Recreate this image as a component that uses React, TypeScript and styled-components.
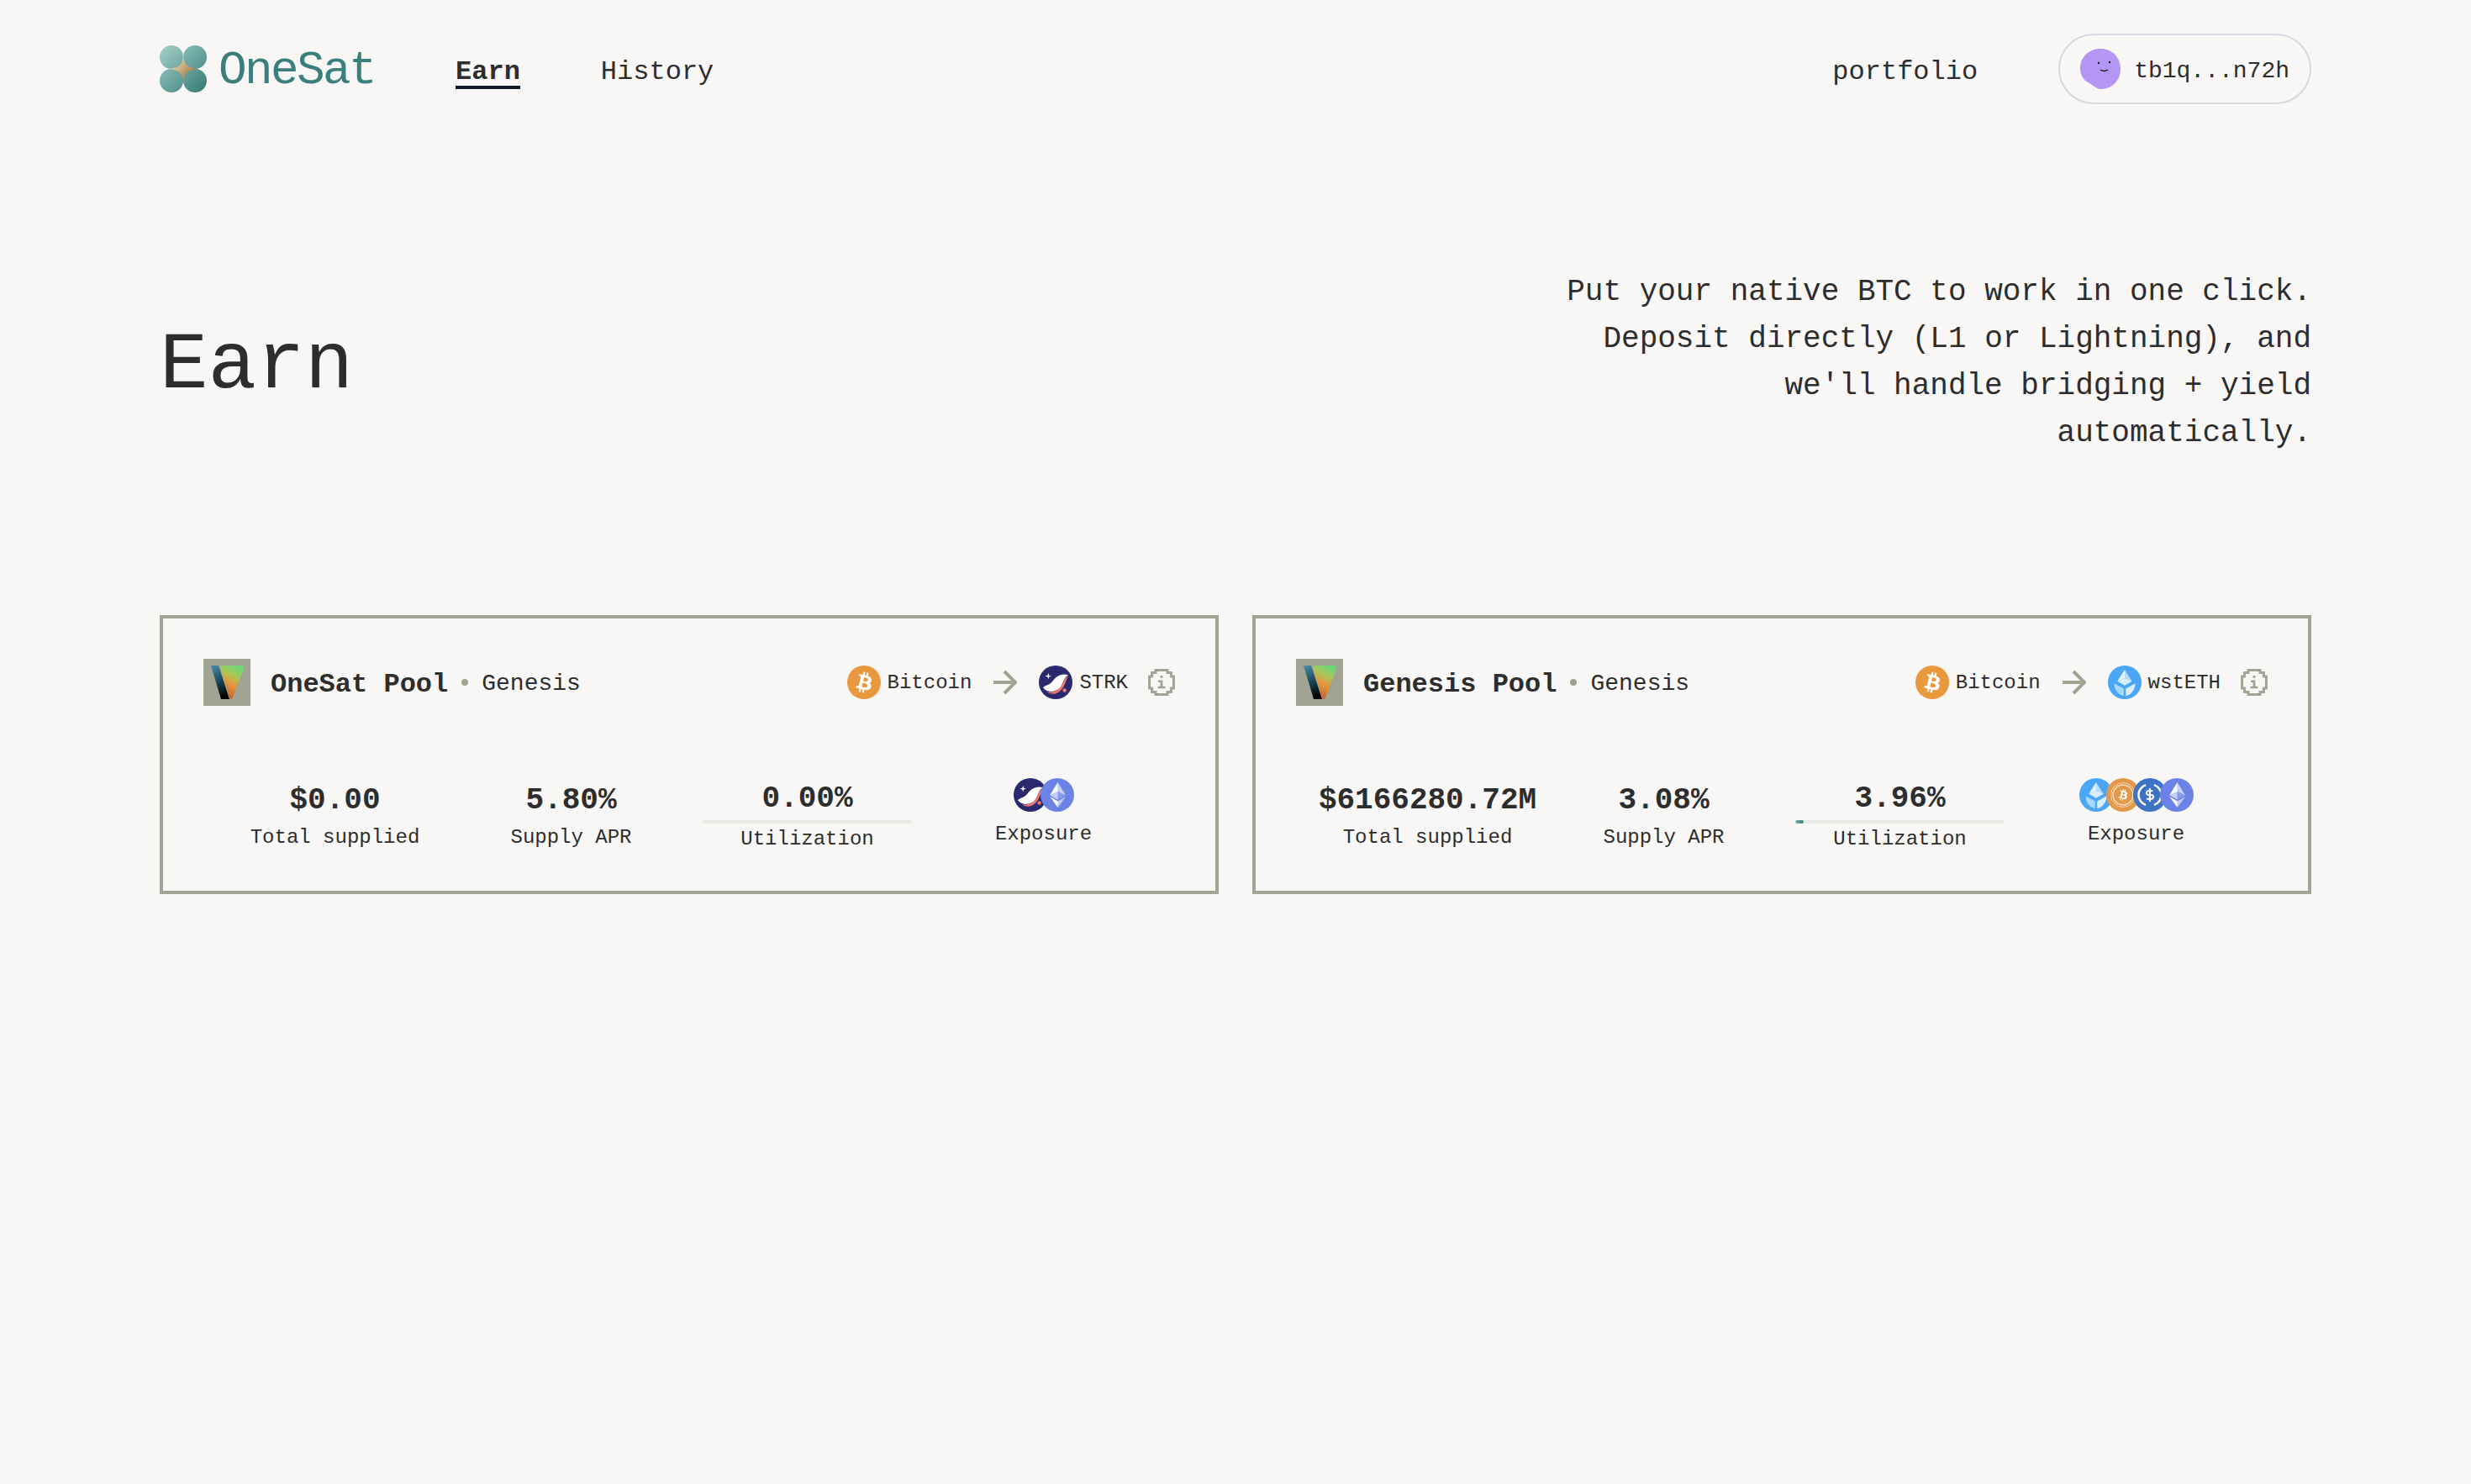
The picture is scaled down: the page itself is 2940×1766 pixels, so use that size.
import React from "react";
import styled, { createGlobalStyle } from "styled-components";

const GlobalStyle = createGlobalStyle`
    * {
        box-sizing: border-box;
    }

    body {
        margin: 0;
        background: #f8f7f5;
        color: #2d2d2d;
        font-family: "Liberation Mono", "DejaVu Sans Mono", monospace;
    }
`;

const Page = styled.div`
    min-height: 100vh;
    padding: 40px 190px 0;
`;

const Header = styled.header`
    display: flex;
    align-items: center;
    justify-content: space-between;
    height: 84px;
`;

const HeaderSide = styled.div`
    display: flex;
    align-items: center;
    gap: 96px;
`;

const Brand = styled.div`
    display: flex;
    align-items: center;
    gap: 14px;
`;

const BrandName = styled.span`
    padding-top: 4px;
    font-size: 56px;
    line-height: 56px;
    letter-spacing: -2.6px;
    color: #3a7f7d;
`;

const Nav = styled.nav`
    display: flex;
    gap: 96px;
`;

const NavLink = styled.a<{ $active?: boolean }>`
    font-size: 32px;
    line-height: 32px;
    font-weight: ${props => (props.$active ? 700 : 400)};
    border-top: 12px solid transparent;
    border-bottom: 4px solid ${props => (props.$active ? "#111827" : "transparent")};
`;

const PortfolioLink = styled.a`
    padding-top: 8px;
    font-size: 32px;
    line-height: 40px;
`;

const WalletPill = styled.button`
    display: flex;
    align-items: center;
    gap: 16px;
    height: 84px;
    padding: 0 24px;
    border: 2px solid #d6d8e0;
    border-radius: 42px;
    background: transparent;
    color: inherit;
    font-family: inherit;
    font-size: 28px;
`;

const WalletAddress = styled.span`
    padding-top: 4px;
`;

const Hero = styled.section`
    display: flex;
    align-items: center;
    justify-content: space-between;
    padding: 188px 0;
`;

const Title = styled.h1`
    margin: 0;
    padding-top: 16px;
    font-size: 96px;
    line-height: 120px;
    font-weight: 400;
`;

const Intro = styled.p`
    margin: 0;
    max-width: 900px;
    padding-top: 8px;
    font-size: 36px;
    line-height: 56px;
    text-align: right;
`;

const PoolGrid = styled.div`
    display: grid;
    grid-template-columns: repeat(2, minmax(0, 1fr));
    gap: 40px;
`;

const PoolCard = styled.article`
    padding: 48px;
    border: 4px solid #a1a492;
`;

const CardTop = styled.div`
    display: flex;
    align-items: center;
    justify-content: space-between;
    height: 56px;
`;

const PoolName = styled.div`
    display: flex;
    align-items: center;
    gap: 24px;
`;

const PoolTitle = styled.div`
    display: flex;
    align-items: center;
    gap: 16px;
`;

const PoolHeading = styled.strong`
    padding-top: 4px;
    font-size: 32px;
    font-weight: 700;
`;

const PoolTag = styled.span`
    padding-top: 2px;
    font-size: 28px;
`;

const Dot = styled.span`
    width: 8px;
    height: 8px;
    border-radius: 50%;
    background: #a1a492;
`;

const Route = styled.div`
    display: flex;
    align-items: center;
    font-size: 24px;
`;

const RouteToken = styled.span`
    display: flex;
    align-items: center;
    gap: 8px;
`;

const RouteArrow = styled.svg`
    width: 28px;
    height: 30px;
    margin: 0 26px;
`;

const InfoIcon = styled.svg`
    width: 32px;
    height: 32px;
    margin-left: 24px;
`;

const StatRow = styled.div`
    display: grid;
    grid-template-columns: repeat(4, minmax(0, 1fr));
    align-items: center;
    height: 92px;
    margin-top: 80px;
    padding: 0 16px;
`;

const Stat = styled.div`
    display: flex;
    flex-direction: column;
    align-items: center;
    min-width: 0;
    padding: 0 16px;
    white-space: nowrap;
`;

const StatValue = styled.div`
    padding-top: 6px;
    font-size: 36px;
    line-height: 50px;
    font-weight: 700;
`;

const StatLabel = styled.div`
    padding-top: 6px;
    font-size: 24px;
    line-height: 26px;
`;

const Track = styled.div`
    width: 100%;
    height: 4px;
    border-radius: 2px;
    background: #e8e9e4;
    overflow: hidden;
`;

const TrackFill = styled.div`
    height: 100%;
    border-radius: 2px;
    background: linear-gradient(90deg, #6fb0aa, #3c807d);
`;

const CoinStack = styled.div`
    display: flex;
    margin-bottom: 8px;

    svg + svg {
        margin-left: -8px;
    }
`;

const BrandMark = () => (
    <svg width="56" height="56" viewBox="0 0 56 56">
        <defs>
            <linearGradient id="petal" gradientUnits="userSpaceOnUse" x1="2" y1="2" x2="54" y2="54">
                <stop offset="0" stopColor="#a0cfc6" />
                <stop offset="1" stopColor="#377c79" />
            </linearGradient>
            <linearGradient id="spark" x1="0" y1="0" x2="1" y2="1">
                <stop offset="0" stopColor="#fffaf0" />
                <stop offset="0.45" stopColor="#c9ab7c" />
                <stop offset="1" stopColor="#6e5128" />
            </linearGradient>
        </defs>
        <circle cx="14" cy="14" r="14" fill="url(#petal)" />
        <circle cx="42" cy="14" r="14" fill="url(#petal)" />
        <circle cx="14" cy="42" r="14" fill="url(#petal)" />
        <circle cx="42" cy="42" r="14" fill="url(#petal)" />
        <path d="M28 9C28.600 22 30 26 47 28C30 30 28.600 34 28 47C27.400 34 26 30 11 28C26 26 27.400 22 28 9Z" fill="url(#spark)" />
    </svg>
);

const Avatar = () => (
    <svg width="48" height="48" viewBox="0 0 48 48">
        <path d="M24 0C38 0 48 10 48 24C48 38 38 48 24 48C20 48 18 45 6 38C2 34 0 29 0 24C0 10 10 0 24 0Z" fill="#b497f5" />
        <circle cx="22" cy="17" r="1.2" fill="#1c1c1c" />
        <circle cx="35" cy="16" r="1.2" fill="#1c1c1c" />
        <path d="M24 25C27 27 30 27 33 25" stroke="#1c1c1c" strokeWidth="1.4" fill="none" />
    </svg>
);

const VaultMark = ({ id }: { id: string }) => (
    <svg width="56" height="56" viewBox="0 0 56 56">
        <defs>
            <linearGradient id={`${id}-bar`} x1="0" y1="0" x2="0.3" y2="1">
                <stop offset="0" stopColor="#4a8fae" />
                <stop offset="0.5" stopColor="#1f4f63" />
                <stop offset="1" stopColor="#050607" />
            </linearGradient>
            <linearGradient id={`${id}-wedge`} x1="0.7" y1="0" x2="0.35" y2="1">
                <stop offset="0" stopColor="#6ad877" />
                <stop offset="0.3" stopColor="#a9c75a" />
                <stop offset="0.55" stopColor="#e59a3c" />
                <stop offset="1" stopColor="#c85d2a" />
            </linearGradient>
        </defs>
        <rect width="56" height="56" fill="#a1a492" />
        <path d="M9 8H18L31 48H21Z" fill={`url(#${id}-bar)`} />
        <path d="M21 8H46C48 8 48.500 10 48 12L35 46C34 48.500 32 48.500 31 46L20 10C20 9 20 8 21 8Z" fill={`url(#${id}-wedge)`} />
    </svg>
);

const EthShape = () => (
    <g fill="#fff">
        <path fillOpacity=".6" d="M16.498 4v8.87l7.497 3.35z" />
        <path d="M16.498 4L9 16.22l7.498-3.35z" />
        <path fillOpacity=".6" d="M16.498 21.968v6.027L24 17.616z" />
        <path d="M16.498 27.995v-6.028L9 17.616z" />
        <path fillOpacity=".2" d="M16.498 20.573l7.497-4.353-7.497-3.348z" />
        <path fillOpacity=".6" d="M9 16.22l7.498 4.353v-7.701z" />
    </g>
);

const btcPath =
    "M23.189 14.02c.314-2.096-1.283-3.223-3.465-3.975l.708-2.84-1.728-.43-.69 2.765c-.454-.114-.92-.22-1.385-.326l.695-2.783L15.596 6l-.708 2.839c-.376-.086-.746-.17-1.104-.26l.002-.009-2.384-.595-.46 1.846s1.283.294 1.256.312c.7.175.826.638.805 1.006l-.806 3.235c.048.012.11.03.18.057l-.183-.045-1.13 4.532c-.086.212-.303.531-.793.41.018.025-1.256-.313-1.256-.313l-.858 1.978 2.25.561c.418.105.828.215 1.231.318l-.715 2.872 1.727.43.708-2.84c.472.127.93.245 1.378.357l-.706 2.828 1.728.43.715-2.866c2.948.558 5.164.333 6.097-2.333.752-2.146-.037-3.385-1.588-4.192 1.13-.26 1.98-1.003 2.207-2.538zm-3.95 5.538c-.533 2.147-4.148.986-5.32.695l.95-3.805c1.172.293 4.929.872 4.37 3.11zm.535-5.569c-.487 1.953-3.495.96-4.47.717l.86-3.45c.975.243 4.118.696 3.61 2.733z";

type CoinName = "btc" | "strk" | "eth" | "wsteth" | "wbtc" | "usdc";

const coinArt: Record<CoinName, React.ReactNode> = {
    btc: (
        <>
            <circle cx="16" cy="16" r="16" fill="#e9983d" />
            <path d={btcPath} fill="#fff" />
        </>
    ),
    strk: (
        <>
            <circle cx="16" cy="16" r="16" fill="#29296e" />
            <path
                d="M4 21C7 18 10 19 13 15C16 11 21 7 28 9C24 11 24 15 21 20C18 25 8 27 4 21Z"
                fill="#fff"
            />
            <path d="M8 25C14 26 18 24 21 20C23.500 16 24 12 28 9C25 17 23 26 14 27C11 27 9 26 8 25Z" fill="#ec796b" />
            <circle cx="24.500" cy="23.500" r="1.800" fill="#ec796b" />
            <path d="M9 7L9.700 9.300L12 10L9.700 10.700L9 13L8.300 10.700L6 10L8.300 9.300Z" fill="#fff" />
        </>
    ),
    eth: (
        <>
            <circle cx="16" cy="16" r="16" fill="#6b82e6" />
            <EthShape />
        </>
    ),
    wsteth: (
        <>
            <circle cx="16" cy="16" r="16" fill="#4ba6f5" />
            <path d="M16 4L23 15L16 12Z" fill="#fff" fillOpacity=".6" />
            <path d="M16 4L9 15L16 12Z" fill="#fff" fillOpacity=".85" />
            <path d="M16 12L23 15L16 19L9 15Z" fill="#d9efff" />
            <path d="M6 17L15 22V29C10 28 6 23 6 17Z" fill="#a9d8fb" />
            <path d="M26 17L17 22V29C22 28 26 23 26 17Z" fill="#d9efff" />
        </>
    ),
    wbtc: (
        <>
            <circle cx="16" cy="16" r="16" fill="#e4984a" />
            <circle cx="16" cy="16" r="11.500" fill="none" stroke="#f3d3ab" strokeWidth=".8" />
            <circle cx="16" cy="16" r="9.500" fill="none" stroke="#fbeedd" strokeWidth=".9" />
            <g transform="translate(7.200 7.200) scale(.55)">
                <path d={btcPath} fill="#fff" />
            </g>
        </>
    ),
    usdc: (
        <>
            <circle cx="16" cy="16" r="16" fill="#3e73c4" />
            <path d="M12 6.500A10 10 0 0 0 12 25.500M20 6.500A10 10 0 0 1 20 25.500" stroke="#fff" strokeWidth="2" fill="none" />
            <g transform="translate(9.500 9.500) scale(.54)" stroke="#fff" strokeWidth="3" fill="none">
                <path d="M12 0V24M17 5H9.500A3.500 3.500 0 0 0 9.500 12H14.500A3.500 3.500 0 0 1 14.500 19H6" />
            </g>
        </>
    ),
};

const Coin = ({ name }: { name: CoinName }) => (
    <svg width="40" height="40" viewBox="0 0 32 32">
        {coinArt[name]}
    </svg>
);

type Pool = {
    id: string;
    name: string;
    target: string;
    targetCoin: CoinName;
    supplied: string;
    apr: string;
    utilization: number;
    exposure: CoinName[];
};

const pools: Pool[] = [
    {
        id: "onesat",
        name: "OneSat Pool",
        target: "STRK",
        targetCoin: "strk",
        supplied: "$0.00",
        apr: "5.80%",
        utilization: 0,
        exposure: ["strk", "eth"],
    },
    {
        id: "genesis",
        name: "Genesis Pool",
        target: "wstETH",
        targetCoin: "wsteth",
        supplied: "$6166280.72M",
        apr: "3.08%",
        utilization: 3.96,
        exposure: ["wsteth", "wbtc", "usdc", "eth"],
    },
];

const App = () => {
    return (
        <Page>
            <GlobalStyle />
            <Header>
                <HeaderSide>
                    <Brand>
                        <BrandMark />
                        <BrandName>OneSat</BrandName>
                    </Brand>
                    <Nav>
                        <NavLink $active>Earn</NavLink>
                        <NavLink>History</NavLink>
                    </Nav>
                </HeaderSide>
                <HeaderSide>
                    <PortfolioLink>portfolio</PortfolioLink>
                    <WalletPill>
                        <Avatar />
                        <WalletAddress>tb1q...n72h</WalletAddress>
                    </WalletPill>
                </HeaderSide>
            </Header>
            <Hero>
                <Title>Earn</Title>
                <Intro>
                    Put your native BTC to work in one click. Deposit directly (L1 or
                    Lightning), and we'll handle bridging + yield automatically.
                </Intro>
            </Hero>
            <PoolGrid>
                {pools.map(pool => (
                    <PoolCard key={pool.id}>
                        <CardTop>
                            <PoolName>
                                <VaultMark id={pool.id} />
                                <PoolTitle>
                                    <PoolHeading>{pool.name}</PoolHeading>
                                    <Dot />
                                    <PoolTag>Genesis</PoolTag>
                                </PoolTitle>
                            </PoolName>
                            <Route>
                                <RouteToken>
                                    <Coin name="btc" />
                                    Bitcoin
                                </RouteToken>
                                <RouteArrow viewBox="0 0 28 30" fill="none" stroke="#a1a492" strokeWidth="4">
                                    <path d="M0 15H25M13 2L26 15L13 28" />
                                </RouteArrow>
                                <RouteToken>
                                    <Coin name={pool.targetCoin} />
                                    {pool.target}
                                </RouteToken>
                                <InfoIcon viewBox="0 0 16 16">
                                    <path
                                        d="M4.500 .8H11.500V2.300H13.700V4.500H15.200V11.500H13.700V13.700H11.500V15.200H4.500V13.700H2.300V11.500H.8V4.500H2.300V2.300H4.500Z"
                                        fill="none"
                                        stroke="#a1a492"
                                        strokeWidth="1.500"
                                    />
                                    <path
                                        d="M7.300 4H8.700V5.400H7.300ZM6 6.800H8.700V10.400H10.200V11.600H5.800V10.400H7.300V8H6Z"
                                        fill="#a1a492"
                                    />
                                </InfoIcon>
                            </Route>
                        </CardTop>
                        <StatRow>
                            <Stat>
                                <StatValue>{pool.supplied}</StatValue>
                                <StatLabel>Total supplied</StatLabel>
                            </Stat>
                            <Stat>
                                <StatValue>{pool.apr}</StatValue>
                                <StatLabel>Supply APR</StatLabel>
                            </Stat>
                            <Stat>
                                <StatValue>{pool.utilization.toFixed(2)}%</StatValue>
                                <Track>
                                    <TrackFill style={{ width: `${pool.utilization}%` }} />
                                </Track>
                                <StatLabel>Utilization</StatLabel>
                            </Stat>
                            <Stat>
                                <CoinStack>
                                    {pool.exposure.map(coin => (
                                        <Coin key={coin} name={coin} />
                                    ))}
                                </CoinStack>
                                <StatLabel>Exposure</StatLabel>
                            </Stat>
                        </StatRow>
                    </PoolCard>
                ))}
            </PoolGrid>
        </Page>
    );
};

export default App;
